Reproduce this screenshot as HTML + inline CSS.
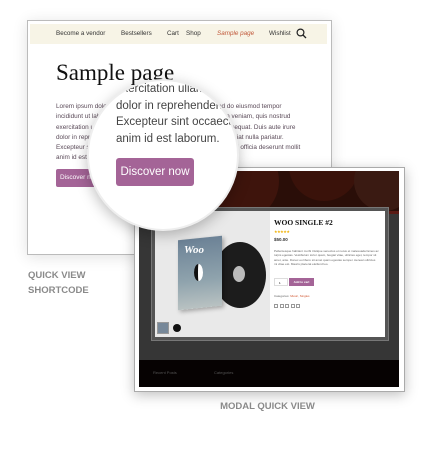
<!DOCTYPE html>
<html><head><style>
*{margin:0;padding:0;box-sizing:border-box}
body{width:421px;height:450px;background:#fff;position:relative;overflow:hidden;font-family:"Liberation Sans",sans-serif}
.a{position:absolute}
</style></head><body>
<div class="a" style="left:27px;top:20px;width:305px;height:235px;border:1px solid #bbb;background:#fff;box-shadow:0 2px 14px rgba(0,0,0,.12)"></div>
<div class="a" style="left:30px;top:24px;width:297px;height:20px;background:#f7f4e6"></div>
<div class="a" style="top:30px;left:56px;font-size:6.3px;color:#333;white-space:nowrap">Become a vendor</div>
<div class="a" style="top:30px;left:121px;font-size:6.3px;color:#333">Bestsellers</div>
<div class="a" style="top:30px;left:167px;font-size:6.3px;color:#333">Cart</div>
<div class="a" style="top:30px;left:186px;font-size:6.3px;color:#333">Shop</div>
<div class="a" style="top:30px;left:217px;font-size:6.3px;color:#c0583a;font-style:italic;white-space:nowrap">Sample page</div>
<div class="a" style="top:30px;left:269px;font-size:6.3px;color:#333">Wishlist</div>
<svg class="a" style="left:296px;top:28px" width="11" height="11" viewBox="0 0 11 11"><circle cx="4.5" cy="4.5" r="3.4" fill="none" stroke="#222" stroke-width="1.2"/><path d="M7 7L10 10" stroke="#222" stroke-width="1.3"/></svg>
<div class="a" style="left:56px;top:60px;font-family:'Liberation Serif',serif;font-size:23px;color:#111;white-space:nowrap">Sample page</div>
<div class="a" style="left:56px;top:102px;font-size:6.4px;line-height:10.3px;color:#5a4a58;white-space:nowrap">Lorem ipsum dolor sit amet, consectetur adipisicing elit, sed do eiusmod tempor<br>incididunt ut labore et dolore magna aliqua. Ut enim ad minim veniam, quis nostrud<br>exercitation ullamco laboris nisi ut aliquip ex ea commodo consequat. Duis aute irure<br>dolor in reprehenderit in voluptate velit esse cillum dolore eu fugiat nulla pariatur.<br>Excepteur sint occaecat cupidatat non proident, sunt in culpa qui officia deserunt mollit<br>anim id est laborum.</div>
<div class="a" style="left:56px;top:169px;width:50px;height:18px;background:#a46497;border-radius:2px;color:#fff;font-size:6.5px;line-height:18px;padding-left:4px;white-space:nowrap;overflow:hidden">Discover now</div>
<div class="a" style="left:28px;top:268px;font-size:9.5px;line-height:15px;color:#8a8a8a;font-weight:bold">QUICK VIEW<br>SHORTCODE</div>
<div class="a" style="left:134px;top:167px;width:271px;height:225px;background:#fff;border:1px solid #aaa;box-shadow:0 3px 12px rgba(0,0,0,.25)"></div>
<div class="a" style="left:139px;top:171px;width:260px;height:216px;background:#363636;overflow:hidden">
 <div class="a" style="left:0;top:0;width:260px;height:42px;background:#2a0e08"></div>
 <div class="a" style="left:60px;top:-30px;width:80px;height:80px;border-radius:50%;background:#3e140c"></div>
 <div class="a" style="left:150px;top:-40px;width:70px;height:70px;border-radius:50%;background:#3a120a"></div>
 <div class="a" style="left:215px;top:-20px;width:60px;height:60px;border-radius:50%;background:#3a1a12"></div>
 <div class="a" style="left:0;top:40px;width:260px;height:3px;background:#5a1a14"></div>
 <div class="a" style="left:0;top:189px;width:260px;height:27px;background:#060202"></div>
 <div class="a" style="left:14px;top:199px;font-size:4px;color:#555">Recent Posts</div>
 <div class="a" style="left:75px;top:199px;font-size:4px;color:#555">Categories</div>
</div>
<div class="a" style="left:151px;top:207px;width:238px;height:134px;background:#555;border:1px solid #777"></div>
<div class="a" style="left:155px;top:211px;width:230px;height:126px;background:#fff"></div>
<div class="a" style="left:155px;top:211px;width:115px;height:126px;background:#e9e9e9"></div>
<div class="a" style="left:214px;top:242px;width:52px;height:66px;border-radius:50%;background:#1c1c1c"></div>
<div class="a" style="left:233px;top:266px;width:12px;height:16px;border-radius:50%;background:#bbb"></div>
<div class="a" style="left:178px;top:238px;width:44px;height:70px;background:linear-gradient(#6c8296,#8fa3ad 60%,#b9c2c2);transform:skewY(-6deg);box-shadow:2px 2px 4px rgba(0,0,0,.3)"></div>
<div class="a" style="left:184px;top:244px;font-family:'Liberation Serif',serif;font-style:italic;color:#fff;font-size:11px;font-weight:bold">Woo</div>
<div class="a" style="left:194px;top:264px;width:9px;height:17px;border-radius:50%;background:#fff;border-left:4px solid #111"></div>
<div class="a" style="left:157px;top:322px;width:12px;height:12px;border:1px solid #999;background:#789"></div>
<div class="a" style="left:173px;top:324px;width:8px;height:8px;border-radius:50%;background:#111"></div>
<div class="a" style="left:274px;top:218px;font-family:'Liberation Serif',serif;font-weight:bold;font-size:7.5px;color:#111;white-space:nowrap">WOO SINGLE #2</div>
<div class="a" style="left:274px;top:229px;font-size:4px;color:#f0b000;letter-spacing:-.5px">★★★★★</div>
<div class="a" style="left:274px;top:237px;font-size:4.5px;font-weight:bold;color:#333">$50.00</div>
<div class="a" style="left:274px;top:249px;width:105px;font-size:3px;line-height:4.3px;color:#666">Pellentesque habitant morbi tristique senectus et netus et malesuada fames ac turpis egestas. Vestibulum tortor quam, feugiat vitae, ultricies eget, tempor sit amet, ante. Donec eu libero sit amet quam egestas semper. Aenean ultricies mi vitae est. Mauris placerat eleifend leo.</div>
<div class="a" style="left:274px;top:278px;width:14px;height:8px;border:1px solid #ddd;font-size:3px;padding:2px 0 0 4px">1</div>
<div class="a" style="left:289px;top:278px;width:25px;height:8px;background:#a46497;color:#fff;font-size:3px;font-weight:bold;line-height:8px;text-align:center">Add to cart</div>
<div class="a" style="left:274px;top:294px;font-size:3px;color:#666;white-space:nowrap">Categories: <span style="color:#d0542e">Music, Singles</span></div>
<div class="a" style="left:274px;top:304px;display:flex;gap:1.5px"><i style="width:4px;height:4px;border:1px solid #999"></i><i style="width:4px;height:4px;border:1px solid #999"></i><i style="width:4px;height:4px;border:1px solid #999"></i><i style="width:4px;height:4px;border:1px solid #999"></i><i style="width:4px;height:4px;border:1px solid #999"></i></div>
<div class="a" style="left:190px;top:401px;width:155px;text-align:center;font-size:9.5px;color:#8a8a8a;font-weight:bold">MODAL QUICK VIEW</div>
<div class="a" style="left:87px;top:79px;width:152px;height:152px;border-radius:50%;background:#fff;border:2px solid #eee;box-shadow:0 4px 14px rgba(0,0,0,.25);overflow:hidden">
 <div class="a" style="left:27px;top:0px;width:140px;font-size:11.5px;line-height:16.7px;color:#444;white-space:nowrap">exercitation ullamco<br>dolor in reprehenderit<br>Excepteur sint occaecat c<br>anim id est laborum.</div>
 <div class="a" style="left:27px;top:77px;width:78px;height:28px;background:#a46497;border-radius:3px;color:#fff;font-size:11.5px;line-height:28px;text-align:center;white-space:nowrap">Discover now</div>
</div>
</body></html>
